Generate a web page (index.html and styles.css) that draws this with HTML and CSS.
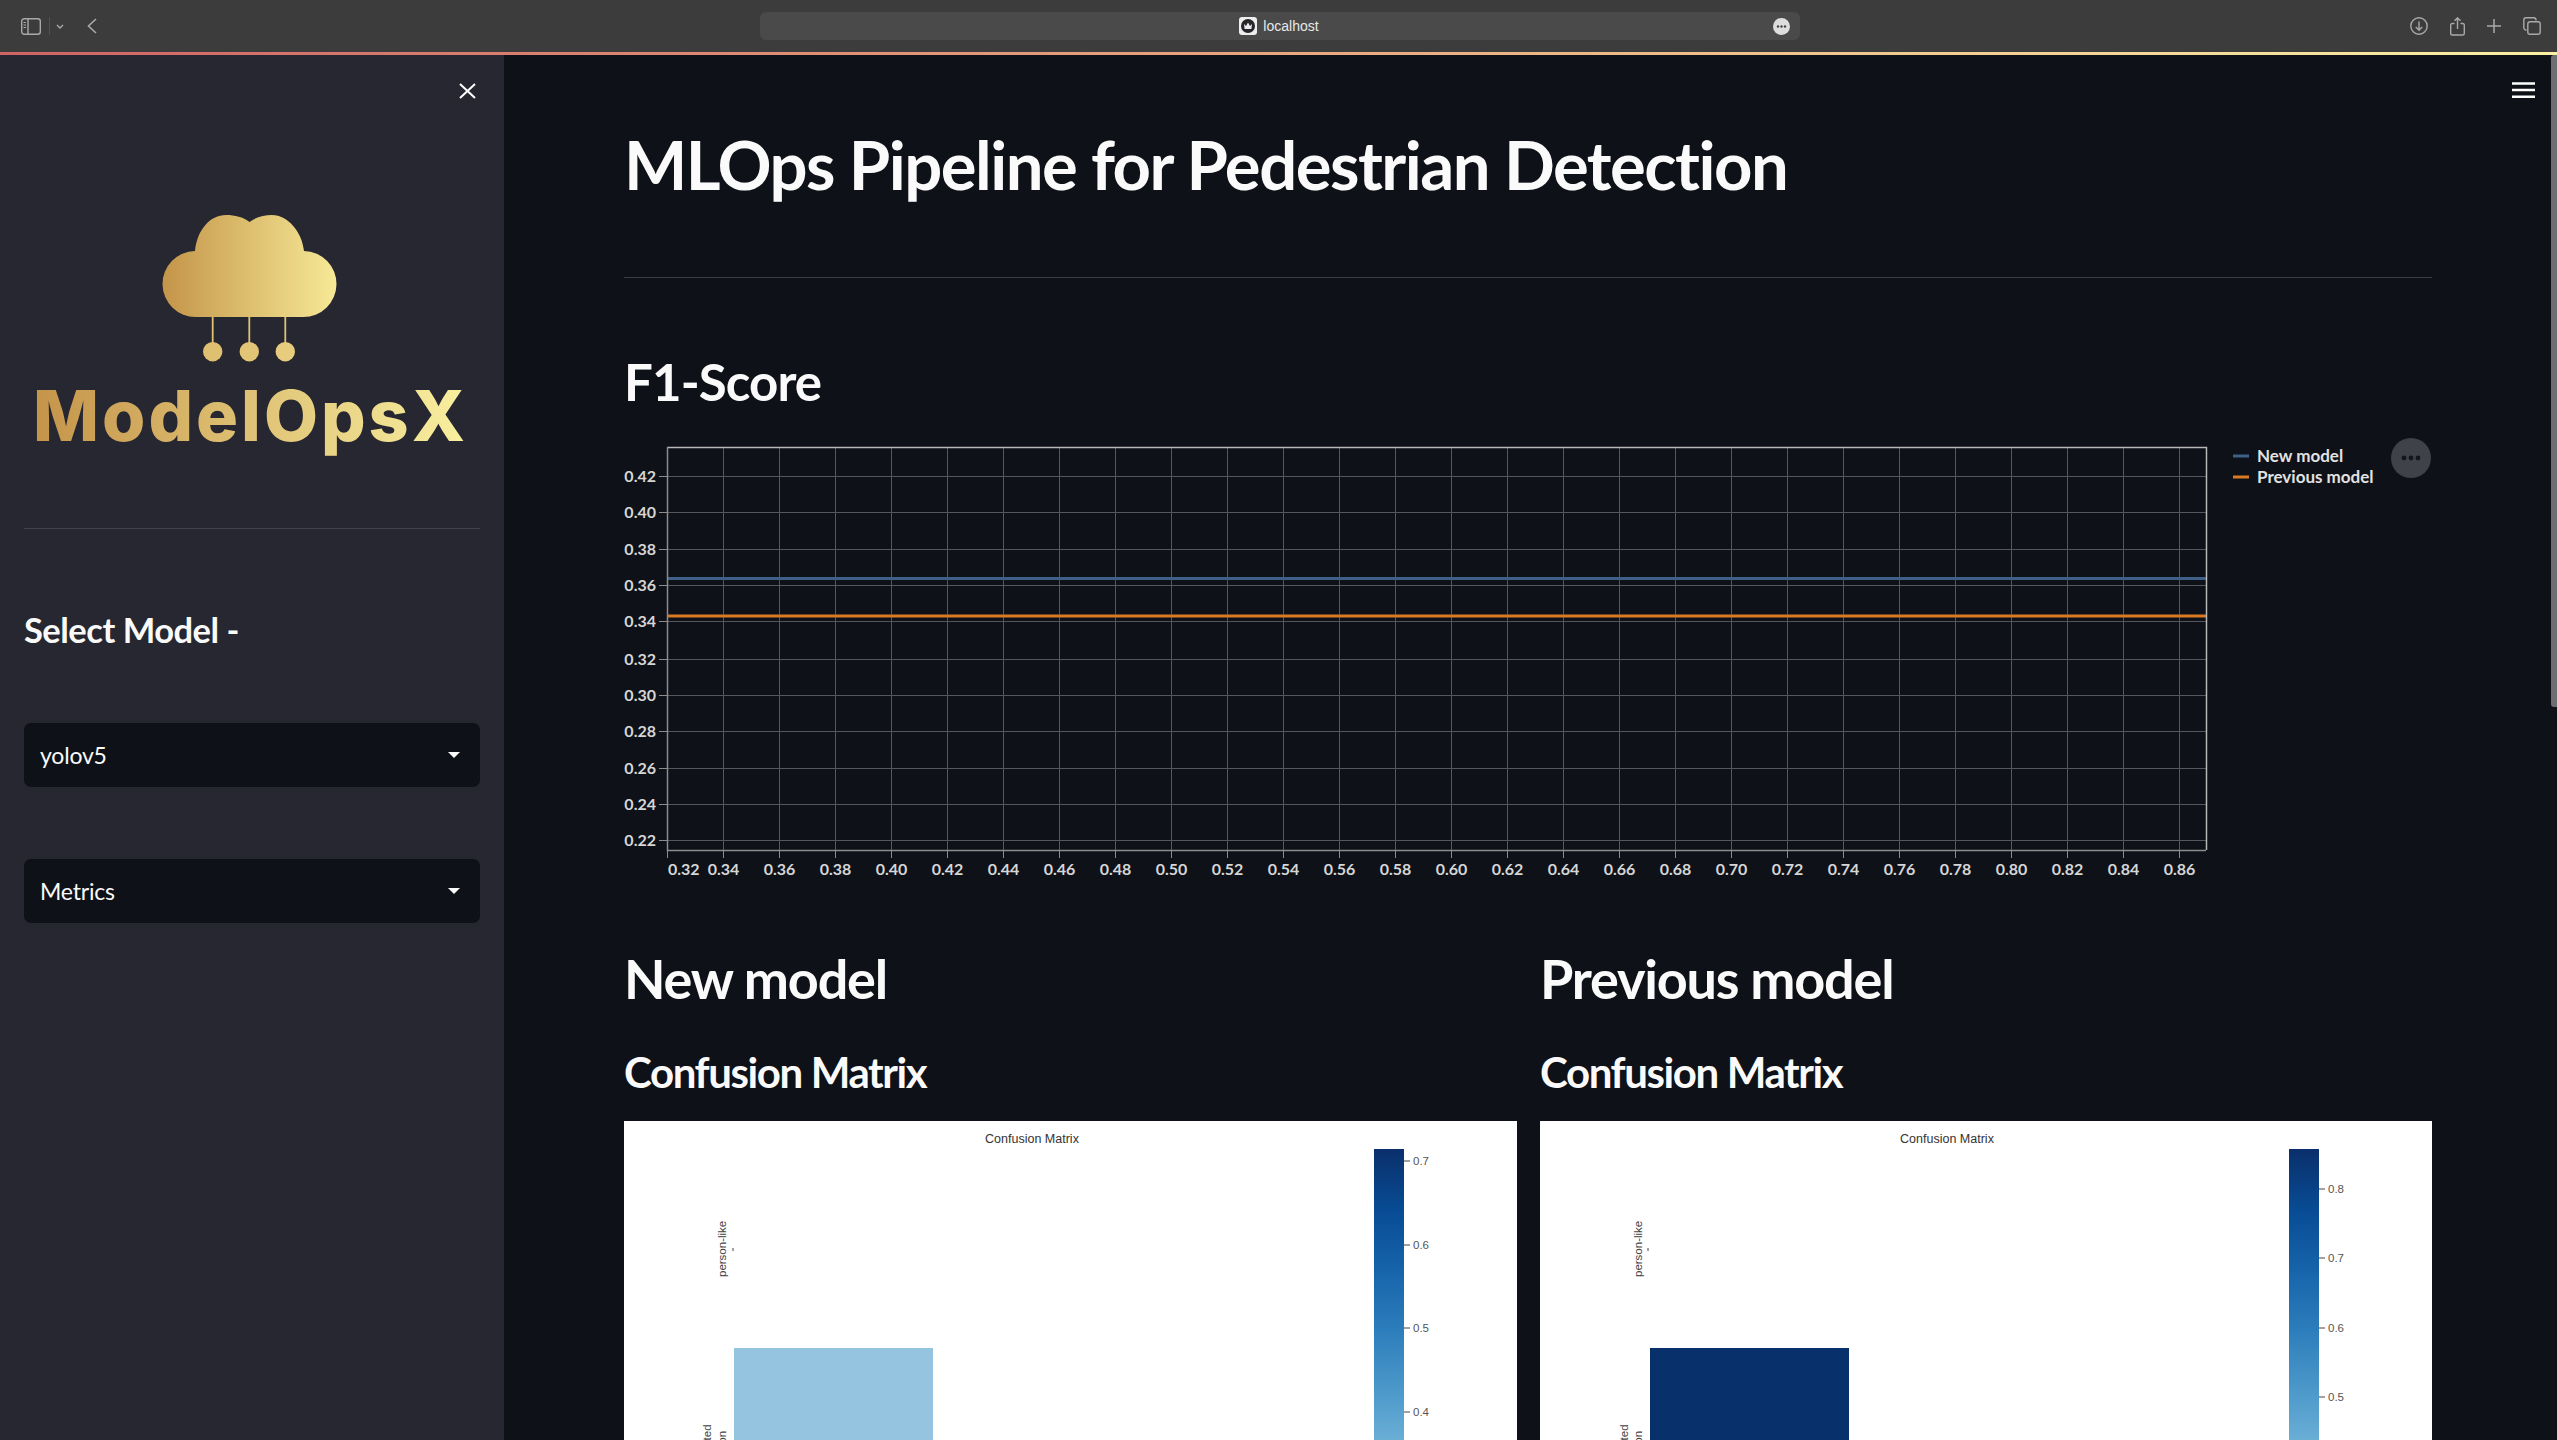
FILE: index.html
```html
<!DOCTYPE html>
<html lang="en">
<head>
  <meta charset="UTF-8" />
  <title>MLOps Pipeline for Pedestrian Detection</title>
  <link rel="stylesheet" href="styles.css">
</head>
<body>
  <!-- Browser toolbar -->
  <header class="toolbar">
    <div class="toolbar-left">
      <svg class="icon-sidebar" width="20" height="17" viewBox="0 0 20 17" fill="none" stroke="#a9a9a9" stroke-width="1.4">
        <rect x="0.7" y="0.7" width="18.6" height="15.6" rx="2.5"/>
        <path d="M7 1V16"/>
        <path d="M2.5 4.5H5M2.5 7H5M2.5 9.5H5" stroke-width="1.1"/>
      </svg>
      <span class="toolbar-divider"></span>
      <svg class="icon-chevron" width="8" height="5" viewBox="0 0 8 5" fill="none" stroke="#a9a9a9" stroke-width="1.4">
        <path d="M1 1L4 4L7 1"/>
      </svg>
      <svg class="icon-back" width="10" height="16" viewBox="0 0 10 16" fill="none" stroke="#a9a9a9" stroke-width="1.6">
        <path d="M9 1L1.5 8L9 15"/>
      </svg>
    </div>
    <div class="url-bar">
      <span></span>
      <div class="url-text">
        <svg width="18" height="18" viewBox="0 0 18 18">
          <rect width="18" height="18" rx="3" fill="#eeeeee"/>
          <circle cx="9" cy="9" r="7" fill="#26262a"/>
          <path d="M5 7L7 9L9 5.5L11 9L13 7L12.4 12H5.6Z" fill="#eeeeee"/>
        </svg>
        <span>localhost</span>
      </div>
      <svg class="url-more" width="17" height="17" viewBox="0 0 17 17">
        <circle cx="8.5" cy="8.5" r="8.5" fill="#dddddd"/>
        <circle cx="5" cy="8.5" r="1.2" fill="#444444"/>
        <circle cx="8.5" cy="8.5" r="1.2" fill="#444444"/>
        <circle cx="12" cy="8.5" r="1.2" fill="#444444"/>
      </svg>
    </div>
    <div class="toolbar-right">
      <svg width="18" height="18" viewBox="0 0 18 18" fill="none" stroke="#a9a9a9" stroke-width="1.4">
        <circle cx="9" cy="9" r="8.2"/>
        <path d="M9 4.5V13M5.8 10L9 13.2L12.2 10"/>
      </svg>
      <svg width="15" height="19" viewBox="0 0 15 19" fill="none" stroke="#a9a9a9" stroke-width="1.4">
        <path d="M4.5 6.5H2.2A1.5 1.5 0 0 0 0.7 8V16.5A1.5 1.5 0 0 0 2.2 18H12.8A1.5 1.5 0 0 0 14.3 16.5V8A1.5 1.5 0 0 0 12.8 6.5H10.5"/>
        <path d="M7.5 12V1M4.5 3.8L7.5 0.9L10.5 3.8"/>
      </svg>
      <svg width="14" height="14" viewBox="0 0 14 14" fill="none" stroke="#a9a9a9" stroke-width="1.5">
        <path d="M7 0V14M0 7H14"/>
      </svg>
      <svg width="18" height="18" viewBox="0 0 18 18" fill="none" stroke="#a9a9a9" stroke-width="1.4">
        <path d="M3.5 13H3A2.2 2.2 0 0 1 0.8 10.8V3A2.2 2.2 0 0 1 3 0.8H10.8A2.2 2.2 0 0 1 13 3V3.5"/>
        <rect x="4.8" y="4.8" width="12.4" height="12.4" rx="2.2"/>
      </svg>
    </div>
  </header>
  <div class="decoration"></div>

  <div class="app">
    <!-- Sidebar -->
    <aside class="sidebar">
      <div class="sidebar-close">
        <svg width="17" height="16" viewBox="0 0 17 16" stroke="#ffffff" stroke-width="2">
          <path d="M1 1L16 15M16 1L1 15"/>
        </svg>
      </div>
      <svg class="logo" width="505" height="270" viewBox="0 200 505 270">
        <defs>
          <linearGradient id="cloudGold" gradientUnits="userSpaceOnUse" x1="163" y1="0" x2="336" y2="0">
            <stop offset="0" stop-color="#c4954a"/>
            <stop offset="1" stop-color="#f6e996"/>
          </linearGradient>
          <linearGradient id="textGold" gradientUnits="userSpaceOnUse" x1="34" y1="0" x2="464" y2="0">
            <stop offset="0" stop-color="#c4944a"/>
            <stop offset="1" stop-color="#f9ef9f"/>
          </linearGradient>
        </defs>
        <path fill="url(#cloudGold)" d="M196 317A33 33 0 0 1 195 251C197 230 210 215 226 215C235 215 243 217 249.5 222C256 217 264 215 272 215C288 215 302 232 304 251A33 33 0 0 1 303 317Z"/>
        <path stroke="#e0c272" stroke-width="1.8" d="M212.7 317V344M249.3 317V344M285.3 317V344"/>
        <circle cx="212.7" cy="351.7" r="9.7" fill="#dfc070"/>
        <circle cx="249.3" cy="351.7" r="9.7" fill="#e2c676"/>
        <circle cx="285.3" cy="351.7" r="9.7" fill="#e6cc7c"/>
        <text class="logo-text" x="33" y="441" fill="url(#textGold)">ModelOpsX</text>
      </svg>
      <hr class="sidebar-rule">
      <h3 class="sidebar-title">Select Model -</h3>
      <div class="select-box first">
        <span>yolov5</span>
        <span class="select-arrow"></span>
      </div>
      <div class="select-box">
        <span>Metrics</span>
        <span class="select-arrow"></span>
      </div>
    </aside>

    <!-- Main -->
    <main class="main">
      <svg class="menu-icon" width="23" height="16" viewBox="0 0 23 16" stroke="#ffffff" stroke-width="2.4">
        <path d="M0 1.5H23M0 8H23M0 14.7H23"/>
      </svg>
      <div class="scroll-thumb"></div>

      <h1 class="page-title">MLOps Pipeline for Pedestrian Detection</h1>
      <hr class="page-rule">
      <h3 class="chart-title">F1-Score</h3>

      <div class="chart">
        <svg class="chart-svg" width="1808" height="460" viewBox="624 430 1808 460">
          <path class="grid" d="M723.5 448V850M779.5 448V850M835.5 448V850M891.5 448V850M947.5 448V850M1003.5 448V850M1059.5 448V850M1115.5 448V850M1171.5 448V850M1227.5 448V850M1283.5 448V850M1339.5 448V850M1395.5 448V850M1451.5 448V850M1507.5 448V850M1563.5 448V850M1619.5 448V850M1675.5 448V850M1731.5 448V850M1787.5 448V850M1843.5 448V850M1899.5 448V850M1955.5 448V850M2011.5 448V850M2067.5 448V850M2123.5 448V850M2179.5 448V850"/>
          <path class="grid" d="M668 476.5H2206M668 512.5H2206M668 549.5H2206M668 585.5H2206M668 621.5H2206M668 659.5H2206M668 695.5H2206M668 731.5H2206M668 768.5H2206M668 804.5H2206M668 840.5H2206"/>
          <path class="line-new" d="M668 578.5H2206"/>
          <path class="line-prev" d="M668 616H2206"/>
          <path class="frame-light" d="M667 447.5H2206.5V850"/>
          <path class="frame-dark" d="M667.5 447V850.5H2206"/>
          <path class="tick" d="M667.5 850V858M723.5 850V858M779.5 850V858M835.5 850V858M891.5 850V858M947.5 850V858M1003.5 850V858M1059.5 850V858M1115.5 850V858M1171.5 850V858M1227.5 850V858M1283.5 850V858M1339.5 850V858M1395.5 850V858M1451.5 850V858M1507.5 850V858M1563.5 850V858M1619.5 850V858M1675.5 850V858M1731.5 850V858M1787.5 850V858M1843.5 850V858M1899.5 850V858M1955.5 850V858M2011.5 850V858M2067.5 850V858M2123.5 850V858M2179.5 850V858"/>
          <path class="tick" d="M659 476.5H667M659 512.5H667M659 549.5H667M659 585.5H667M659 621.5H667M659 659.5H667M659 695.5H667M659 731.5H667M659 768.5H667M659 804.5H667M659 840.5H667"/>
          <g class="y-labels">
            <text x="656" y="482">0.42</text>
            <text x="656" y="518">0.40</text>
            <text x="656" y="555">0.38</text>
            <text x="656" y="591">0.36</text>
            <text x="656" y="627">0.34</text>
            <text x="656" y="665">0.32</text>
            <text x="656" y="701">0.30</text>
            <text x="656" y="737">0.28</text>
            <text x="656" y="774">0.26</text>
            <text x="656" y="810">0.24</text>
            <text x="656" y="846">0.22</text>
          </g>
          <g class="x-labels">
            <text class="x-first" x="668" y="875">0.32</text>
            <text x="723.5" y="875">0.34</text>
            <text x="779.5" y="875">0.36</text>
            <text x="835.5" y="875">0.38</text>
            <text x="891.5" y="875">0.40</text>
            <text x="947.5" y="875">0.42</text>
            <text x="1003.5" y="875">0.44</text>
            <text x="1059.5" y="875">0.46</text>
            <text x="1115.5" y="875">0.48</text>
            <text x="1171.5" y="875">0.50</text>
            <text x="1227.5" y="875">0.52</text>
            <text x="1283.5" y="875">0.54</text>
            <text x="1339.5" y="875">0.56</text>
            <text x="1395.5" y="875">0.58</text>
            <text x="1451.5" y="875">0.60</text>
            <text x="1507.5" y="875">0.62</text>
            <text x="1563.5" y="875">0.64</text>
            <text x="1619.5" y="875">0.66</text>
            <text x="1675.5" y="875">0.68</text>
            <text x="1731.5" y="875">0.70</text>
            <text x="1787.5" y="875">0.72</text>
            <text x="1843.5" y="875">0.74</text>
            <text x="1899.5" y="875">0.76</text>
            <text x="1955.5" y="875">0.78</text>
            <text x="2011.5" y="875">0.80</text>
            <text x="2067.5" y="875">0.82</text>
            <text x="2123.5" y="875">0.84</text>
            <text x="2179.5" y="875">0.86</text>
          </g>
          <!-- Legend -->
          <path class="line-new" d="M2233 456H2249"/>
          <path class="line-prev" d="M2233 477H2249"/>
          <text class="legend-text" x="2257" y="462">New model</text>
          <text class="legend-text" x="2257" y="483">Previous model</text>
          <circle cx="2411" cy="458" r="20" fill="#3f4248"/>
          <circle cx="2404" cy="458" r="2.4" fill="#14161b"/>
          <circle cx="2411" cy="458" r="2.4" fill="#14161b"/>
          <circle cx="2418" cy="458" r="2.4" fill="#14161b"/>
        </svg>
      </div>

      <div class="columns">
        <section class="column">
          <h2 class="model-title">New model</h2>
          <h3 class="matrix-title">Confusion Matrix</h3>
          <svg class="matrix" width="893" height="319" viewBox="624 1121 893 319">
            <defs>
              <linearGradient id="blues" x1="0" y1="0" x2="0" y2="1">
                <stop offset="0" stop-color="#0a2f6b"/>
                <stop offset="0.22" stop-color="#084d96"/>
                <stop offset="0.42" stop-color="#1764ab"/>
                <stop offset="0.62" stop-color="#2c7dbb"/>
                <stop offset="0.85" stop-color="#4f9bcb"/>
                <stop offset="1" stop-color="#6aaed6"/>
              </linearGradient>
            </defs>
            <rect x="624" y="1121" width="893" height="319" fill="#ffffff"/>
            <text class="matrix-heading" x="1032" y="1143">Confusion Matrix</text>
            <text class="matrix-label" transform="translate(726 1277) rotate(-90)">person-like</text>
            <path class="matrix-tick" d="M733 1248V1251"/>
            <rect x="734" y="1348" width="199" height="92" fill="#94c4df"/>
            <text class="matrix-label" transform="translate(711 1473) rotate(-90)">Predicted</text>
            <text class="matrix-label" transform="translate(726 1466) rotate(-90)">person</text>
            <rect x="1374" y="1149" width="30" height="291" fill="url(#blues)"/>
            <path class="matrix-tick" d="M1404 1161H1410M1404 1245H1410M1404 1328H1410M1404 1412H1410"/>
            <text class="matrix-value" x="1413" y="1165">0.7</text>
            <text class="matrix-value" x="1413" y="1249">0.6</text>
            <text class="matrix-value" x="1413" y="1332">0.5</text>
            <text class="matrix-value" x="1413" y="1416">0.4</text>
          </svg>
        </section>
        <section class="column">
          <h2 class="model-title">Previous model</h2>
          <h3 class="matrix-title">Confusion Matrix</h3>
          <svg class="matrix" width="892" height="319" viewBox="1540 1121 892 319">
            <rect x="1540" y="1121" width="892" height="319" fill="#ffffff"/>
            <text class="matrix-heading" x="1947" y="1143">Confusion Matrix</text>
            <text class="matrix-label" transform="translate(1642 1277) rotate(-90)">person-like</text>
            <path class="matrix-tick" d="M1648 1248V1251"/>
            <rect x="1650" y="1348" width="199" height="92" fill="#08306b"/>
            <text class="matrix-label" transform="translate(1628 1473) rotate(-90)">Predicted</text>
            <text class="matrix-label" transform="translate(1642 1466) rotate(-90)">person</text>
            <rect x="2289" y="1149" width="30" height="291" fill="url(#blues)"/>
            <path class="matrix-tick" d="M2319 1189H2325M2319 1258H2325M2319 1328H2325M2319 1397H2325"/>
            <text class="matrix-value" x="2328" y="1193">0.8</text>
            <text class="matrix-value" x="2328" y="1262">0.7</text>
            <text class="matrix-value" x="2328" y="1332">0.6</text>
            <text class="matrix-value" x="2328" y="1401">0.5</text>
          </svg>
        </section>
      </div>
    </main>
  </div>
</body>
</html>
```

FILE: styles.css
```css
/* Page */
html, body {
  height: 100%;
}

body {
  margin: 0;
  height: 1440px;
  overflow: hidden;
  display: flex;
  flex-direction: column;
  background-color: #0e1117;
  color: #fafafa;
  font-family: "Lato", "Noto Sans", sans-serif;
}

h1, h2, h3 {
  margin: 0;
  font-weight: 700;
}

/* Browser toolbar */
.toolbar {
  height: 52px;
  flex: none;
  display: grid;
  grid-template-columns: 760px 1040px 1fr;
  align-items: center;
  background-color: #3c3c3c;
}

.toolbar-left {
  display: flex;
  align-items: center;
  padding-left: 21px;
}

.toolbar-divider {
  width: 1px;
  height: 18px;
  margin-left: 8px;
  background-color: #505050;
}

.icon-chevron {
  margin-left: 6px;
}

.icon-back {
  margin-left: 23px;
}

.url-bar {
  height: 28px;
  display: grid;
  grid-template-columns: 1fr auto 1fr;
  align-items: center;
  padding-right: 10px;
  border-radius: 6px;
  background-color: #4a4a4a;
}

.url-text {
  display: flex;
  align-items: center;
  gap: 6px;
  margin-left: 8px;
  font-family: "Liberation Sans", sans-serif;
  font-size: 14px;
  color: #e8e8e8;
}

.url-more {
  justify-self: end;
}

.toolbar-right {
  display: flex;
  align-items: center;
  justify-content: flex-end;
  gap: 22px;
  padding-right: 16px;
}

.decoration {
  height: 3px;
  flex: none;
  background-image: linear-gradient(90deg, #cf6466, #e9a77f 50%, #fbf0a4);
}

.app {
  flex: 1;
  display: flex;
  min-height: 0;
}

/* Sidebar */
.sidebar {
  width: 504px;
  flex: none;
  background-color: #262730;
}

.sidebar-close {
  display: flex;
  justify-content: flex-end;
  padding: 28px 28px 0 0;
}

.logo {
  display: block;
  margin-top: 101px;
}

.logo-text {
  font-family: "Inter", sans-serif;
  font-weight: 800;
  font-size: 70px;
  letter-spacing: 3px;
}

.sidebar-rule {
  margin: 58px 24px 0;
  border: 0;
  border-top: 1px solid #41434d;
}

.sidebar-title {
  margin: 78px 24px 0;
  font-size: 34.5px;
  letter-spacing: -0.5px;
  line-height: 46px;
}

.select-box {
  height: 64px;
  margin: 72px 24px 0;
  padding: 0 16px;
  display: flex;
  align-items: center;
  justify-content: space-between;
  border-radius: 7px;
  background-color: #0e1117;
  font-size: 23px;
  letter-spacing: -0.2px;
}

.select-box.first {
  margin-top: 70px;
}

.select-arrow {
  width: 0;
  height: 0;
  margin-right: 4px;
  border-left: 6px solid transparent;
  border-right: 6px solid transparent;
  border-top: 6px solid #fafafa;
}

/* Main */
.main {
  flex: 1;
  position: relative;
  padding: 64px 125px 0 120px;
  overflow: hidden;
}

.menu-icon {
  position: absolute;
  top: 27px;
  right: 22px;
}

.scroll-thumb {
  position: absolute;
  top: 0;
  right: 0;
  width: 6px;
  height: 652px;
  border-radius: 3px 0 0 3px;
  background-color: #6d6e72;
}

.page-title {
  font-size: 67px;
  letter-spacing: -1.5px;
  line-height: 90px;
}

.page-rule {
  margin: 68px 0 0;
  border: 0;
  border-top: 1px solid #3a3c44;
}

.chart-title {
  margin-top: 69px;
  font-size: 51px;
  letter-spacing: -0.9px;
  line-height: 70px;
}

/* F1 chart */
.chart {
  margin-top: 13px;
}

.chart-svg {
  display: block;
}

.grid {
  fill: none;
  stroke: #55575c;
  stroke-width: 1;
}

.frame-light {
  fill: none;
  stroke: #b8b8b8;
  stroke-width: 1.5;
}

.frame-dark {
  fill: none;
  stroke: #8c8c8c;
  stroke-width: 1.5;
}

.tick {
  fill: none;
  stroke: #8c8c8c;
  stroke-width: 1;
}

.line-new {
  fill: none;
  stroke: #3f6088;
  stroke-width: 3;
}

.line-prev {
  fill: none;
  stroke: #d97b22;
  stroke-width: 3;
}

.y-labels text,
.x-labels text {
  fill: #d6d6d6;
  font-size: 16px;
  font-weight: 700;
}

.y-labels text {
  text-anchor: end;
}

.x-labels text {
  text-anchor: middle;
}

.x-labels .x-first {
  text-anchor: start;
}

.legend-text {
  fill: #e2e2e2;
  font-size: 17px;
  font-weight: 700;
}

/* Model columns */
.columns {
  display: grid;
  grid-template-columns: 893px 892px;
  column-gap: 23px;
  margin-top: 50px;
}

.model-title {
  font-size: 54px;
  letter-spacing: -1.2px;
  line-height: 78px;
}

.matrix-title {
  margin-top: 24px;
  font-size: 42px;
  letter-spacing: -1.4px;
  line-height: 60px;
}

.matrix {
  display: block;
  margin-top: 19px;
}

.matrix-heading {
  fill: #333333;
  font-family: "Liberation Sans", sans-serif;
  font-size: 12.5px;
  text-anchor: middle;
}

.matrix-label {
  fill: #444444;
  font-family: "Liberation Sans", sans-serif;
  font-size: 11.5px;
}

.matrix-value {
  fill: #555555;
  font-family: "Liberation Sans", sans-serif;
  font-size: 11.5px;
}

.matrix-tick {
  fill: none;
  stroke: #444444;
  stroke-width: 1;
}
```
